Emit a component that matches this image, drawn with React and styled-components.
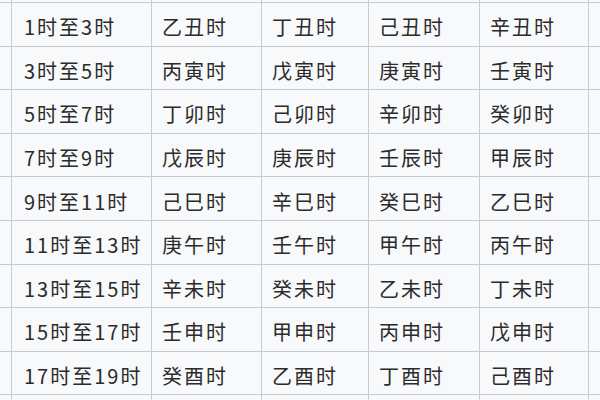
import React from 'react'
import styled, { createGlobalStyle } from 'styled-components'

const Global = createGlobalStyle`
  html, body { margin: 0; padding: 0; background: #f8f9fa; }
  body { width: 600px; height: 400px; overflow: hidden; }
`

const rows = [
  ['1时至3时', '乙丑时', '丁丑时', '己丑时', '辛丑时'],
  ['3时至5时', '丙寅时', '戊寅时', '庚寅时', '壬寅时'],
  ['5时至7时', '丁卯时', '己卯时', '辛卯时', '癸卯时'],
  ['7时至9时', '戊辰时', '庚辰时', '壬辰时', '甲辰时'],
  ['9时至11时', '己巳时', '辛巳时', '癸巳时', '乙巳时'],
  ['11时至13时', '庚午时', '壬午时', '甲午时', '丙午时'],
  ['13时至15时', '辛未时', '癸未时', '乙未时', '丁未时'],
  ['15时至17时', '壬申时', '甲申时', '丙申时', '戊申时'],
  ['17时至19时', '癸酉时', '乙酉时', '丁酉时', '己酉时'],
]

const Sheet = styled.div`
  display: grid;
  grid-template-columns: 11px 139px 109px 106px 110px 108px 1fr;
  grid-template-rows: 2px repeat(9, 42.6px) 1fr;
  gap: 1px;
  width: 600px;
  height: 400px;
  background: #c6cad0;
  font-family: "Noto Sans CJK SC", "Noto Sans", sans-serif;
`

const Cell = styled.div`
  background: #f8f9fa;
  display: flex;
  align-items: center;
  padding: 5px 0 0 ${p => (p.$first ? '12px' : '10px')};
  font-size: 20px;
  letter-spacing: 2px;
  color: #2b2b2b;
  white-space: nowrap;
  overflow: hidden;
`

const Stub = styled.div`
  background: #f8f9fa;
`

export default function App() {
  return (
    <>
      <Global />
      <Sheet>
        {Array.from({ length: 7 }).map((_, i) => <Stub key={'t' + i} />)}
        {rows.map((r, ri) => (
          <React.Fragment key={ri}>
            <Stub />
            {r.map((c, ci) => (
              <Cell key={ci} $first={ci === 0}>{c}</Cell>
            ))}
            <Stub />
          </React.Fragment>
        ))}
        {Array.from({ length: 7 }).map((_, i) => <Stub key={'b' + i} />)}
      </Sheet>
    </>
  )
}
